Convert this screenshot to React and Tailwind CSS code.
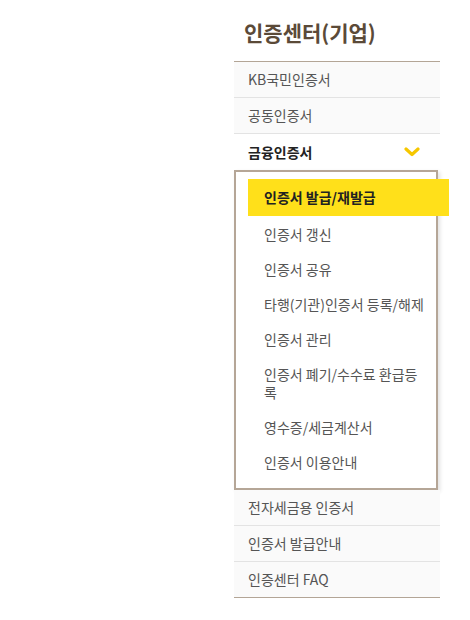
import React from "react";

const font = { fontFamily: '"Noto Sans CJK KR", "Noto Sans", sans-serif' };

function Chevron() {
  return (
    <svg width="16" height="10" viewBox="0 0 16 10" className="block">
      <path d="M2 2 L8 7.5 L14 2" fill="none" stroke="#f6c700" strokeWidth="3.2" strokeLinecap="round" strokeLinejoin="round" />
    </svg>
  );
}

const topItems = ["KB국민인증서", "공동인증서"];
const subItems = [
  "인증서 갱신",
  "인증서 공유",
  "타행(기관)인증서 등록/해제",
  "인증서 관리",
  "인증서 폐기/수수료 환급등록",
  "영수증/세금계산서",
  "인증서 이용안내",
];
const bottomItems = ["전자세금용 인증서", "인증서 발급안내", "인증센터 FAQ"];

export default function App() {
  return (
    <div className="w-[470px] h-[620px] bg-white" style={font}>
      <div className="ml-[234px] w-[206px] pt-[18px]">
        <h2 className="pl-[10px] text-[21px] leading-[29px] font-bold text-[#5b4a38]">인증센터(기업)</h2>
        <ul className="mt-[14px] border-t border-[#b3a596]">
          {topItems.map((t) => (
            <li key={t} className="h-[36px] flex items-center pl-[14px] bg-[#fafafa] border-b border-[#e3e3e3] text-[14px] text-[#555]">
              {t}
            </li>
          ))}
          <li className="h-[36px] flex items-center justify-between pl-[14px] pr-[20px] bg-white text-[14px] font-bold text-[#222]">
            <span>금융인증서</span>
            <Chevron />
          </li>
          <li className="w-[204px] border-2 border-[#b5a697] bg-white pt-[7px] pb-[9px] shadow-[2px_2px_4px_rgba(0,0,0,0.12)]">
            <div className="ml-[12px] w-[201px] h-[37px] flex items-center pl-[16px] bg-[#ffe01a] text-[14px] font-bold text-[#222]">
              인증서 발급/재발급
            </div>
            {subItems.map((t) => (
              <div key={t} className="ml-[12px] pl-[16px] pr-[10px] py-[8.5px] text-[14px] leading-[18px] text-[#555]">
                {t}
              </div>
            ))}
          </li>
          {bottomItems.map((t, i) => (
            <li
              key={t}
              className={
                "h-[36px] flex items-center pl-[14px] bg-[#fafafa] text-[14px] text-[#555] border-b " +
                (i === bottomItems.length - 1 ? "border-[#b3a596]" : "border-[#e3e3e3]")
              }
            >
              {t}
            </li>
          ))}
        </ul>
      </div>
    </div>
  );
}
